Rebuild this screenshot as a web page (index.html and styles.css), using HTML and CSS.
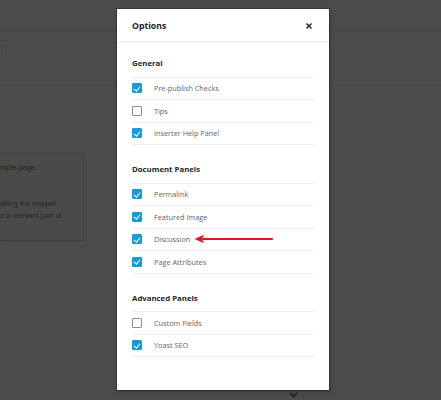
FILE: index.html
```html
<!DOCTYPE html>
<html>
<head>
<meta charset="utf-8">
<link rel="stylesheet" href="styles.css">
</head>
<body>
<div class="page">
  <div class="topbar"></div>
  <div class="subbar"><span class="subbar-tab"></span></div>
  <div class="card">
    <div class="card-line l1">mple-page</div>
    <div class="card-line l2">diting the snippet</div>
    <div class="card-line l3">d a relevant part of</div>
  </div>
  <div class="footer">
    <svg class="chev" width="9" height="6" viewBox="0 0 9 6"><path d="M1 1 L4.5 4.5 L8 1" fill="none" stroke="#1f1f1f" stroke-width="1.6"/></svg>
  </div>
</div>

<div class="modal">
  <div class="modal-header">
    <span class="modal-title">Options</span>
    <svg class="close" width="8" height="8" viewBox="0 0 8 8"><path d="M1.5 1.5 L6.5 6.5 M6.5 1.5 L1.5 6.5" stroke="#2b2b2b" stroke-width="1.5"/></svg>
  </div>
  <div class="modal-body">
    <section class="group">
      <h3 class="group-title">General</h3>
      <ul class="list">
        <li class="row"><span class="cb on"></span><span class="label">Pre-publish Checks</span></li>
        <li class="row"><span class="cb"></span><span class="label">Tips</span></li>
        <li class="row"><span class="cb on"></span><span class="label">Inserter Help Panel</span></li>
      </ul>
    </section>
    <section class="group">
      <h3 class="group-title">Document Panels</h3>
      <ul class="list">
        <li class="row"><span class="cb on"></span><span class="label">Permalink</span></li>
        <li class="row"><span class="cb on"></span><span class="label">Featured Image</span></li>
        <li class="row"><span class="cb on"></span><span class="label">Discussion</span>
          <svg class="arrow" width="80" height="10" viewBox="0 0 80 10"><path d="M9 5 L78 5" stroke="#e3151a" stroke-width="2" stroke-linecap="round"/><path d="M0.5 5 L10 0.8 L8 5 L10 9.2 Z" fill="#e3151a"/></svg>
        </li>
        <li class="row"><span class="cb on"></span><span class="label">Page Attributes</span></li>
      </ul>
    </section>
    <section class="group">
      <h3 class="group-title">Advanced Panels</h3>
      <ul class="list">
        <li class="row"><span class="cb"></span><span class="label">Custom Fields</span></li>
        <li class="row"><span class="cb on"></span><span class="label">Yoast SEO</span></li>
      </ul>
    </section>
  </div>
</div>
</body>
</html>
```

FILE: styles.css
```css
html, body {
  margin: 0;
  padding: 0;
}
body {
  width: 441px;
  height: 400px;
  overflow: hidden;
  background: #4b4b4b;
  font-family: "Open Sans", "Noto Sans", sans-serif;
  position: relative;
}
.page {
  height: 400px;
  display: flex;
  flex-direction: column;
}
.topbar {
  height: 30px;
  border-bottom: 1px solid #444444;
  flex: none;
}
.subbar {
  height: 53px;
  border-bottom: 1px solid #474747;
  flex: none;
  display: flex;
  align-items: flex-start;
}
.subbar-tab {
  width: 6px;
  height: 16px;
  margin-top: 9px;
  border: 1px solid #464646;
  border-left: none;
}
.card {
  flex: none;
  width: 83px;
  height: 87px;
  margin-top: 68px;
  box-sizing: border-box;
  background: #4a4a4a;
  box-shadow: 1px 1px 2px rgba(0,0,0,0.12), 0 0 0 1px #474747;
  overflow: hidden;
  padding-top: 9px;
  font-family: "Liberation Sans", Arial, sans-serif;
  font-size: 7.4px;
  color: #262626;
}
.card-line {
  white-space: nowrap;
  line-height: 11px;
}
.card-line.l1 { margin-bottom: 25px; }
.card-line.l2 { margin-bottom: 1px; }
.footer {
  margin-top: auto;
  height: 9px;
  display: flex;
  padding-left: 289px;
}
.chev { display: block; margin-top: 1px; }

.modal {
  position: absolute;
  left: 117px;
  top: 9px;
  width: 212px;
  height: 381px;
  background: #ffffff;
  box-shadow: 0 0 0 1px rgba(0,0,0,0.25), 1px 2px 4px rgba(0,0,0,0.25);
}
.modal-header {
  height: 32px;
  border-bottom: 1px solid #f0f0f0;
  display: flex;
  align-items: center;
  justify-content: space-between;
  padding: 0 16px 0 15px;
  box-shadow: 0 1px 1px rgba(0,0,0,0.02);
}
.modal-title {
  font-size: 8.7px;
  font-weight: 700;
  color: #1e1e1e;
  margin-top: 2px;
}
.close { display: block; margin-top: 1px; }
.modal-body {
  padding: 14px 14px 0 15px;
}
.group + .group {
  margin-top: 17px;
}
.group-title {
  margin: 0 0 6.5px 0;
  font-size: 7.8px;
  font-weight: 700;
  line-height: 14px;
  color: #23282d;
}
.list {
  list-style: none;
  margin: 0;
  padding: 0;
  border-top: 1px solid #eeeeee;
}
.row {
  height: 21.5px;
  border-bottom: 1px solid #eeeeee;
  display: flex;
  align-items: center;
  position: relative;
}
.cb {
  width: 10px;
  height: 10px;
  box-sizing: border-box;
  border: 1px solid #8a8f94;
  border-radius: 1px;
  background: #fff;
  flex: none;
  margin-right: 12px;
  position: relative;
}
.cb.on {
  background: #179bd7;
  border-color: #179bd7;
}
.cb.on::after {
  content: "";
  position: absolute;
  left: 2.4px;
  top: 0.4px;
  width: 2.6px;
  height: 5px;
  border-right: 1.9px solid #fff;
  border-bottom: 1.9px solid #fff;
  transform: rotate(40deg);
}
.label {
  font-size: 7.3px;
  color: #5f6468;
}
.arrow {
  position: absolute;
  left: 62px;
  top: 5.5px;
}
```
